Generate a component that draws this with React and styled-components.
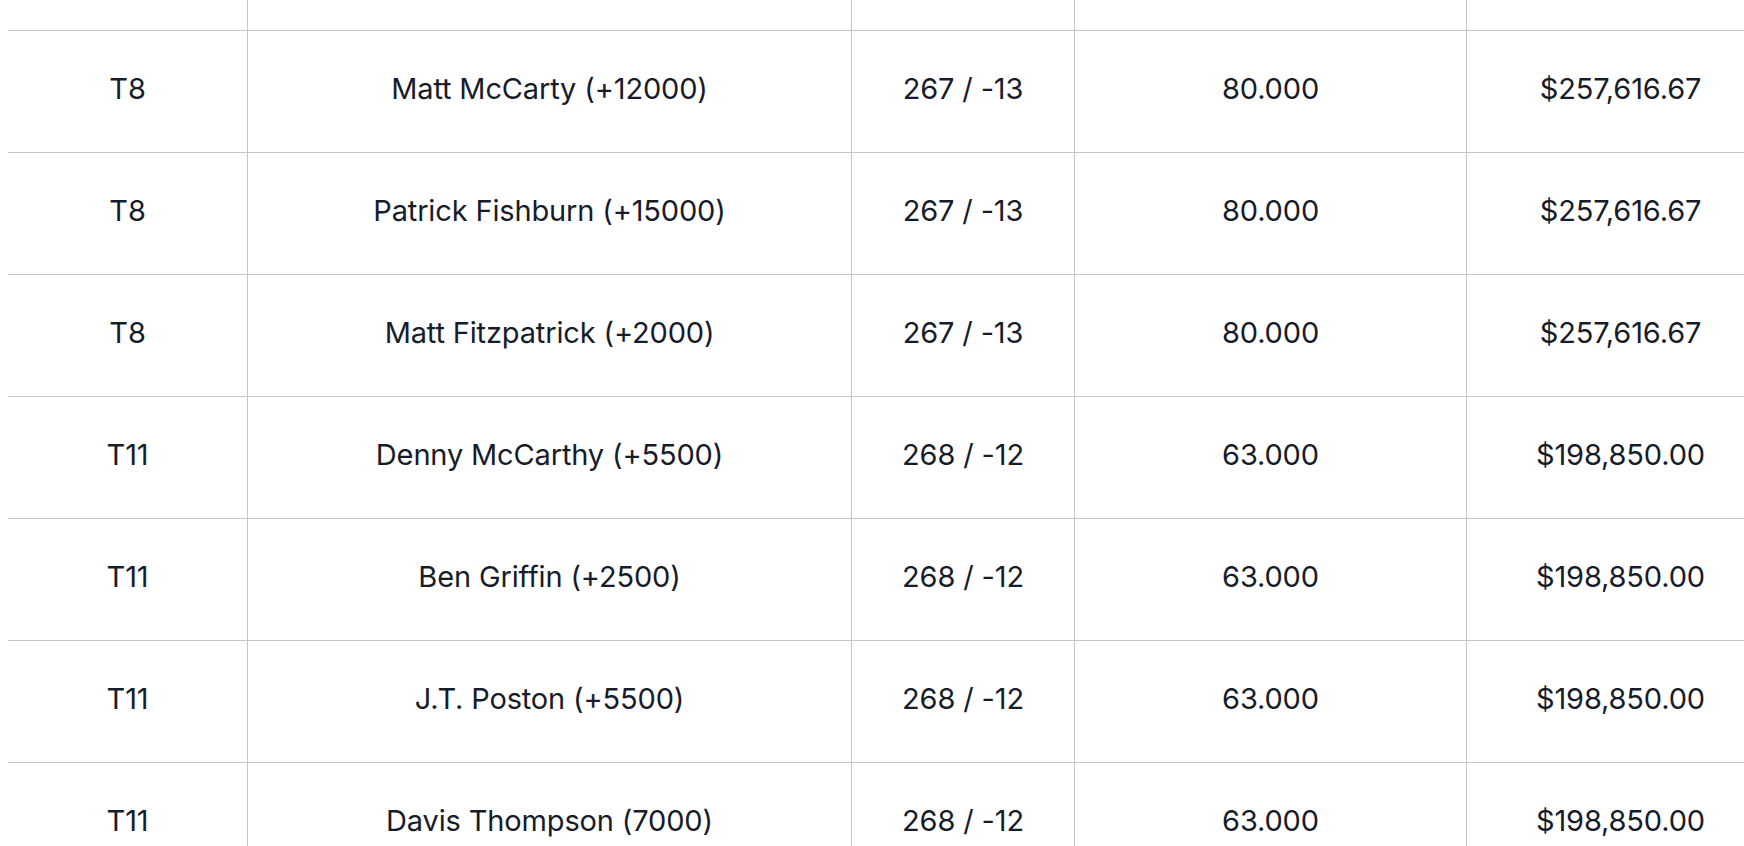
import React from "react";
import styled, { createGlobalStyle } from "styled-components";

const Global = createGlobalStyle`
  html, body { margin: 0; padding: 0; background: #ffffff; }
  body { overflow: hidden; }
`;

const Viewport = styled.div`
  width: 1744px;
  height: 846px;
  overflow: hidden;
  padding-left: 8px;
  box-sizing: border-box;
  font-family: Inter, "Noto Sans", sans-serif;
  color: #171c2a;
`;

const Table = styled.div`
  display: flex;
  flex-direction: column;
  width: 1766px;
`;

const Row = styled.div`
  display: grid;
  grid-template-columns: 240px 604px 223px 392px 307px;
  height: ${(p) => (p.$partial ? "31px" : "122px")};
  box-sizing: border-box;
  border-bottom: 1px solid #c6c6c6;
`;

const Cell = styled.div`
  display: flex;
  align-items: center;
  justify-content: center;
  box-sizing: border-box;
  border-right: ${(p) => (p.$last ? "none" : "1px solid #c6c6c6")};
  font-size: 29px;
  letter-spacing: -0.15px;
  font-weight: 400;
  padding-bottom: 6px;
  white-space: nowrap;
`;

const rows = [
  ["T8", "Matt McCarty (+12000)", "267 / -13", "80.000", "$257,616.67"],
  ["T8", "Patrick Fishburn (+15000)", "267 / -13", "80.000", "$257,616.67"],
  ["T8", "Matt Fitzpatrick (+2000)", "267 / -13", "80.000", "$257,616.67"],
  ["T11", "Denny McCarthy (+5500)", "268 / -12", "63.000", "$198,850.00"],
  ["T11", "Ben Griffin (+2500)", "268 / -12", "63.000", "$198,850.00"],
  ["T11", "J.T. Poston (+5500)", "268 / -12", "63.000", "$198,850.00"],
  ["T11", "Davis Thompson (7000)", "268 / -12", "63.000", "$198,850.00"],
];

export default function App() {
  return (
    <>
      <Global />
      <Viewport>
        <Table>
          <Row $partial>
            {[0, 1, 2, 3, 4].map((i) => (
              <Cell key={i} $last={i === 4} />
            ))}
          </Row>
          {rows.map((r, ri) => (
            <Row key={ri}>
              {r.map((c, ci) => (
                <Cell key={ci} $last={ci === 4}>
                  {c}
                </Cell>
              ))}
            </Row>
          ))}
        </Table>
      </Viewport>
    </>
  );
}
